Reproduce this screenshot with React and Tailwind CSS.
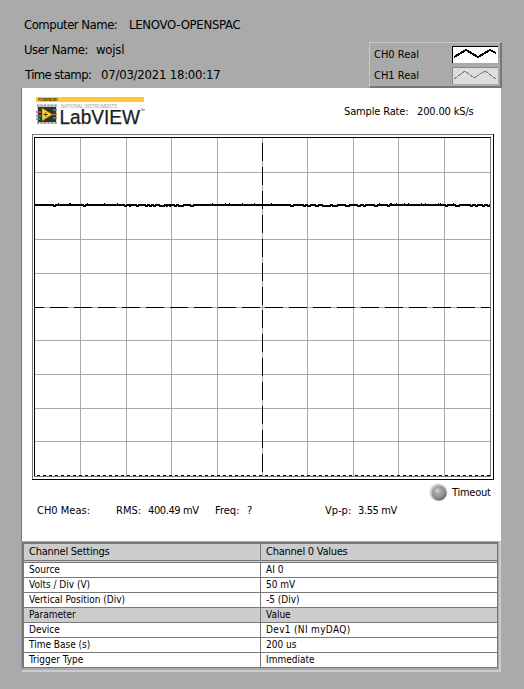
import React from "react";

const VERTICALS = [80, 126, 171, 217, 262, 307, 353, 398, 444];
const HORIZONTALS = [172, 205, 239, 273, 307, 340, 374, 408, 441];

// Noise samples one pixel above and below the flat trace: [start, width]
const UP = [[58, 1], [69, 2], [87, 1], [104, 1], [117, 1], [212, 1], [225, 1], [229, 1], [242, 1], [254, 1], [271, 1], [379, 1], [390, 2], [396, 1], [404, 1], [408, 1], [421, 1], [425, 1], [438, 1], [440, 1], [453, 1]];
const DOWN = [[53, 3], [83, 3], [124, 3], [129, 2], [136, 3], [145, 3], [149, 3], [153, 3], [159, 6], [166, 2], [169, 2], [174, 3], [178, 6], [190, 4], [290, 4], [303, 3], [307, 4], [315, 4], [322, 9], [332, 6], [345, 5], [357, 4], [363, 3], [374, 4], [387, 3], [445, 3], [455, 5], [470, 3], [475, 3], [482, 3], [487, 3]];

function Text({ width, size = "text-[11px]", className = "", children }) {
  return (
    <span
      style={{ width }}
      className={"block shrink-0 whitespace-nowrap " + size + " " + className}
    >
      {children}
    </span>
  );
}

function Logo() {
  return (
    <svg width="109" height="30" viewBox="0 0 109 30" className="block">
      <rect width="108" height="5" y="0" fill="#ffc92f" />
      <text x="2" y="4" fontSize="4" fontWeight="700" fontFamily="Liberation Sans, sans-serif" fill="#5a3a18" textLength="20">POWERED BY</text>
      <rect x="1" y="7.500" width="20" height="19.500" fill="#d2d5d2" />
      <path d="M1 8.500H21M1 26H21" stroke="#9a9d9a" strokeWidth="2" strokeDasharray="2 1.500" />
      <rect x="2" y="10" width="18" height="15" fill="#2d3331" />
      <path d="M0 15H5M16 17.500H21" stroke="#d45a49" strokeWidth="1.300" />
      <path d="M0 19H5M17 13H21" stroke="#4395ad" strokeWidth="1.300" />
      <path d="M0 22H4M17 21H21" stroke="#43a54f" strokeWidth="1.300" />
      <path d="M6 11L16.500 17.500L6 24Z" fill="#ffd22f" stroke="#806b16" strokeWidth=".6" />
      <path d="M7.500 17.500H12M9.750 15.300V19.700" stroke="#4b4521" strokeWidth="1" />
      <text x="25" y="10.800" fontSize="4.500" fontFamily="Liberation Sans, sans-serif" fill="#9a9a9a" textLength="56">NATIONAL INSTRUMENTS</text>
      <text x="23.500" y="27.300" fontSize="20" fontFamily="Liberation Sans, sans-serif" fill="#1c1c1c" stroke="#1c1c1c" strokeWidth=".25" textLength="80.500" lengthAdjust="spacingAndGlyphs">LabVIEW</text>
      <text x="104" y="15" fontSize="5" fontFamily="Liberation Sans, sans-serif" fill="#333">™</text>
    </svg>
  );
}

function Graph() {
  return (
    <svg width="462" height="346" viewBox="32 134 462 346" shapeRendering="crispEdges" className="block">
      <path d="M32 134H494V135H33V480H32Z" fill="#777" />
      <path d="M493 134H494V480H32V479H493Z" fill="#000" />
      {VERTICALS.map((x) => <rect key={x} x={x} y="138" width="1" height="338" fill="#aaa" />)}
      {HORIZONTALS.map((y) => <rect key={y} x="35" y={y} width="455" height="1" fill="#aaa" />)}
      <path d="M265 307.500H490M260 307.500H35M262.500 310V473M262.500 305V138" fill="none" stroke="#000" strokeDasharray="18 6" />
      <path d="M490 137H491V477H34V476H490Z" fill="#777" />
      <path d="M34 137H491V138H35V476H34Z" fill="#000" />
      <path d="M37 475.500H490" stroke="#000" strokeDasharray="3 3" />
      <path d="M35 204H490V206H35Z" fill="#000" />
      {UP.map(([x, w]) => <rect key={x} x={x} y="203" width={w} height="1" />)}
      {DOWN.map(([x, w]) => (
        <g key={x}>
          <rect x={x} y="206" width={w} height="1" />
          {w > 2 && <rect x={x + 1} y="204" width={w - 2} height="1" fill="#fff" />}
        </g>
      ))}
    </svg>
  );
}

function Legend() {
  return (
    <div className="flex h-[46px] w-[133px] flex-col gap-[3px] border-t border-l border-r-[2px] border-b-2 border-t-[#c8c8c8] border-l-[#c8c8c8] border-r-[#777] border-b-[#777] pt-[3px] pl-1">
      <div className="flex h-[18px] items-start">
        <Text width={78} className="pt-[3px]">CH0 Real</Text>
        <svg width="46" height="17" shapeRendering="crispEdges" className="block">
          <rect width="46" height="17" fill="#fff" />
          <path d="M0 0H46V1H1V17H0Z" />
          <path d="M2 11L14 4L26 11L38 4L44 7" fill="none" stroke="#000" strokeWidth="2" />
        </svg>
      </div>
      <div className="flex h-[18px] items-start">
        <Text width={78} className="pt-[3px]">CH1 Real</Text>
        <svg width="46" height="17" shapeRendering="crispEdges" className="block">
          <rect width="46" height="17" fill="#ddd" />
          <path d="M0 0H46V1H1V17H0Z" fill="#888" />
          <path d="M2 12L13 4L22 11L33 4L44 12" fill="none" stroke="#888" />
        </svg>
      </div>
    </div>
  );
}

const ROWS = [
  ["Source", "AI 0"],
  ["Volts / Div (V)", "50 mV"],
  ["Vertical Position (Div)", "-5 (Div)"],
  ["Parameter", "Value"],
  ["Device", "Dev1 (NI myDAQ)"],
  ["Time Base (s)", "200 us"],
  ["Trigger Type", "Immediate"],
];

export default function App() {
  return (
    <div className="h-[689px] w-[524px] overflow-hidden bg-[#aaa] font-['DejaVu_Sans_Condensed','DejaVu_Sans',sans-serif] leading-none text-black [font-stretch:condensed]">
      <header className="flex h-[88px] pl-6">
        <div className="flex w-[345px] flex-col pt-[18px]">
          <div className="flex h-[25px]">
            <Text width={105} size="text-[13px]" className="tracking-[-0.5px]">Computer Name:</Text>
            <Text width={120} size="text-[13px]" className="tracking-[-0.27px]">LENOVO-OPENSPAC</Text>
          </div>
          <div className="flex h-[25px]">
            <Text width={72} size="text-[13px]" className="tracking-[-0.5px]">User Name:</Text>
            <Text width={80} size="text-[13px]" className="tracking-[-0.2px]">wojsl</Text>
          </div>
          <div className="flex h-[20px] pl-px">
            <Text width={76} size="text-[13px]" className="tracking-[-0.6px]">Time stamp:</Text>
            <Text width={130} size="text-[13px]" className="tracking-[-0.22px]">07/03/2021 18:00:17</Text>
          </div>
        </div>
        <div className="pt-[42px]"><Legend /></div>
      </header>

      <main className="ml-[21px] h-[453px] w-[480px] border-l border-l-[#777] bg-white pl-[10px]">
        <div className="flex h-[46px] justify-between pt-[9px]">
          <div className="pl-1"><Logo /></div>
          <div className="flex w-[157px] pt-[9px]">
            <Text width={73} className="tracking-[-0.15px]">Sample Rate:</Text>
            <Text width={70} className="tracking-[-0.15px]">200.00 kS/s</Text>
          </div>
        </div>
        <Graph />
        <div className="flex h-[24px] items-center justify-end pr-[9px]">
          <svg width="19" height="19" className="mr-1">
            <defs>
              <radialGradient id="led" cx="40%" cy="35%" r="65%">
                <stop offset="0" stopColor="#dcdcdc" />
                <stop offset=".3" stopColor="#a8a8a8" />
                <stop offset=".75" stopColor="#8c8c8c" />
                <stop offset="1" stopColor="#6a6a6a" />
              </radialGradient>
            </defs>
            <circle cx="9.500" cy="9.500" r="9" fill="#d2d2d2" />
            <circle cx="10" cy="10" r="7.500" fill="url(#led)" />
          </svg>
          <Text width={40} className="tracking-[-0.25px]">Timeout</Text>
        </div>
        <div className="flex pt-[1px] pl-[5px]">
          <Text width={79}>CH0 Meas:</Text>
          <Text width={32}>RMS:</Text>
          <Text width={67} className="tracking-[-0.4px]">400.49 mV</Text>
          <Text width={32}>Freq:</Text>
          <Text width={78}>?</Text>
          <Text width={33}>Vp-p:</Text>
          <Text width={60} className="tracking-[-0.4px]">3.55 mV</Text>
        </div>
      </main>

      <section className="ml-[21px] h-[131px] w-[480px] border-r-2 border-b-2 border-l border-[#ccc] border-t border-t-[#aaa] border-l-[#999]">
        <div className="w-[476px] border-t-2 border-r border-l-2 border-[#777]">
          <div className="flex h-[17px] border-b border-[#777] bg-[#ccc]">
            <div className="w-[237px] border-r border-[#777] pt-[2px] pl-[5px]"><Text width={120} className="tracking-[-0.25px]">Channel Settings</Text></div>
            <div className="pt-[2px] pl-[5px]"><Text width={120} className="tracking-[-0.25px]">Channel 0 Values</Text></div>
          </div>
          <div className="h-[2px] border-b border-[#777] bg-[#ccc]" />
          {ROWS.map(([name, value]) => (
            <div key={name} className={"flex h-[15px] border-b border-[#777] " + (name === "Parameter" ? "bg-[#ccc]" : "bg-white")}>
              <div className="w-[237px] border-r border-[#777] pt-[2px] pl-[5px]"><Text width={150} size="text-[10px]">{name}</Text></div>
              <div className="pt-[2px] pl-[5px]"><Text width={150} size="text-[10px]" className={name === "Device" ? "tracking-[0.33px]" : ""}>{value}</Text></div>
            </div>
          ))}
        </div>
      </section>
    </div>
  );
}
